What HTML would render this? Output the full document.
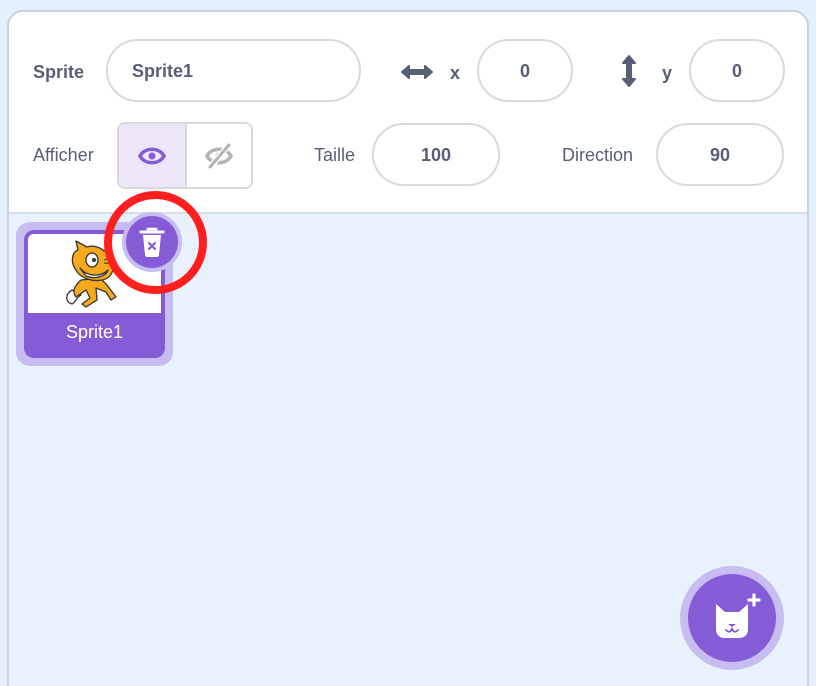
<!DOCTYPE html>
<html><head><meta charset="utf-8"><style>
*{box-sizing:border-box;margin:0;padding:0}
html{width:816px;height:686px;overflow:hidden}
body{width:816px;height:686px;background:#e5f0ff;font-family:"Liberation Sans",Helvetica,Arial,sans-serif;position:relative;overflow:hidden}
.panel{position:absolute;left:7px;top:10px;width:802px;height:700px;border:2px solid #c9d3e1;border-radius:16px;background:#e9f1fc;overflow:hidden}
.top{position:absolute;left:0;top:0;right:0;height:202px;background:#fff;border-bottom:2px solid #d9dee6}
.lbl{position:absolute;color:#575e75;font-size:18px}
.b{font-weight:bold}
.inp{position:absolute;border:2px solid #d9d9d9;border-radius:32px;height:63px;color:#575e75;font-weight:bold;font-size:18px;display:flex;align-items:center;justify-content:center;background:#fff;padding-top:2px}
.abs{position:absolute}
</style></head><body>
<div class="panel">
<div class="top">
 <div class="lbl b" style="left:24px;top:50px">Sprite</div>
 <div class="inp" style="left:97px;top:27px;width:255px;justify-content:flex-start;padding-left:24px">Sprite1</div>
 <svg class="abs" style="left:391px;top:51px" width="34" height="18" viewBox="0 0 34 18"><path d="M2 9 L9 3 V7 H25 V3 L32 9 L25 15 V11 H9 V15 Z" fill="#575e75" stroke="#575e75" stroke-linejoin="round" stroke-width="2"/></svg>
 <div class="lbl b" style="left:441px;top:51px">x</div>
 <div class="inp" style="left:468px;top:27px;width:96px">0</div>
 <svg class="abs" style="left:611px;top:42px" width="18" height="34" viewBox="0 0 18 34"><path d="M9 2 L15 9 H11 V25 H15 L9 32 L3 25 H7 V9 H3 Z" fill="#575e75" stroke="#575e75" stroke-linejoin="round" stroke-width="2"/></svg>
 <div class="lbl b" style="left:653px;top:51px">y</div>
 <div class="inp" style="left:680px;top:27px;width:96px">0</div>

 <div class="lbl" style="left:24px;top:133px">Afficher</div>
 <div class="abs" style="left:108px;top:110px;width:136px;height:67px;border:2px solid #d9d9d9;border-radius:8px;overflow:hidden;display:flex">
  <div style="width:68px;height:100%;background:#ede6f8;border-right:2px solid #d9d9d9;display:flex;align-items:center;justify-content:center">
   <svg width="28" height="20" viewBox="0 0 28 20"><path d="M2 10 C7 1 21 1 26 10 C21 19 7 19 2 10Z" fill="none" stroke="#855cd6" stroke-width="3.5"/><circle cx="14" cy="10" r="3.5" fill="#855cd6"/></svg>
  </div>
  <div style="flex:1;display:flex;align-items:center;justify-content:center">
   <svg width="30" height="26" viewBox="0 0 30 26"><path d="M3 13 C8 4 22 4 27 13 C22 22 8 22 3 13Z" fill="none" stroke="#b3b3b3" stroke-width="3.5"/><circle cx="15" cy="13" r="3.5" fill="#b3b3b3"/><path d="M6 24 L25 2" stroke="#fff" stroke-width="6"/><path d="M6 24 L25 2" stroke="#b3b3b3" stroke-width="3" stroke-linecap="round"/></svg>
  </div>
 </div>
 <div class="lbl" style="left:305px;top:133px">Taille</div>
 <div class="inp" style="left:363px;top:111px;width:128px">100</div>
 <div class="lbl" style="left:553px;top:133px">Direction</div>
 <div class="inp" style="left:647px;top:111px;width:128px">90</div>
</div>
</div>

<!-- sprite tile -->
<div class="abs" style="left:16px;top:222px;width:157px;height:144px;border-radius:14px;background:#c7bdf0"></div>
<div class="abs" style="left:24px;top:230px;width:141px;height:128px;border-radius:10px;background:#855cd6;overflow:hidden">
 <div style="position:absolute;left:4px;top:4px;width:133px;height:79px;background:#fff;border-radius:6px 6px 0 0"></div>
 <div style="position:absolute;left:0;top:92px;width:100%;text-align:center;color:#fff;font-size:18px">Sprite1</div>
</div>
<svg class="abs" style="left:62px;top:240px" width="66" height="68" viewBox="0 0 66 68">
 <g stroke="#333" stroke-width="1.3" stroke-linejoin="round">
 <path d="M10 50 C3 54 3 62 10 64 C14 62 14 58 19 55Z" fill="#fff"/>
 <path d="M19 40 C12 46 10 52 14 57 L24 50 L28 58 L20 64 L24 67 L35 60 L34 48 L44 52 L49 60 L54 57 L45 45 L38 38 Z" fill="#f7a91d"/>
 <path d="M14 30 C8 22 10 12 16 10 L14 1 L25 7 C31 5 38 7 42 11 L48 5 L48 18 C54 24 52 38 40 40 C30 42 18 38 14 30Z" fill="#f7a91d"/>
 <path d="M18 28 C24 36 38 38 46 30 C44 36 34 40 24 36Z" fill="#fff"/>
 <ellipse cx="30" cy="20" rx="6" ry="7" fill="#fff"/>
 </g>
 <circle cx="32" cy="20" r="2" fill="#333"/>
 <path d="M42 20 L52 18 M42 23 L54 24" stroke="#333" stroke-width="1"/>
</svg>
<!-- delete button -->
<div class="abs" style="left:122px;top:212px;width:60px;height:60px;border-radius:50%;background:#c7bdf0"></div>
<div class="abs" style="left:126px;top:216px;width:52px;height:52px;border-radius:50%;background:#855cd6"></div>
<svg class="abs" style="left:138px;top:226px" width="28" height="32" viewBox="0 0 28 32">
 <path d="M3 6 H25" stroke="#fff" stroke-width="3" stroke-linecap="round"/>
 <path d="M10 6 V3 H18 V6" fill="none" stroke="#fff" stroke-width="2.5"/>
 <path d="M5 9 H23 L21 29 C21 30 20 31 19 31 H9 C8 31 7 30 7 29 Z" fill="#fff"/>
 <path d="M11 17 L17 23 M17 17 L11 23" stroke="#855cd6" stroke-width="2.2" stroke-linecap="round"/>
</svg>
<div class="abs" style="left:104px;top:191px;width:103px;height:103px;border-radius:50%;border:8px solid #ff1f1f"></div>

<!-- add sprite button -->
<div class="abs" style="left:680px;top:566px;width:104px;height:104px;border-radius:50%;background:#c7bdf0"></div>
<div class="abs" style="left:688px;top:574px;width:88px;height:88px;border-radius:50%;background:#855cd6"></div>
<svg class="abs" style="left:712px;top:592px" width="52" height="50" viewBox="0 0 52 50">
 <path d="M4 12 L13 20 H27 L36 12 V37 C36 43 32 46 27 46 H13 C8 46 4 43 4 37 Z" fill="#fff"/>
 <path d="M16 32 H24 L20 35Z" fill="#855cd6"/>
 <path d="M14 38 C17 41 19 40 20 36 C21 40 23 41 26 38" fill="none" stroke="#855cd6" stroke-width="1.8" stroke-linecap="round"/>
 <path d="M42 3 V13 M37 8 H47" stroke="#fff" stroke-width="3.2" stroke-linecap="round"/>
</svg>
</body></html>
